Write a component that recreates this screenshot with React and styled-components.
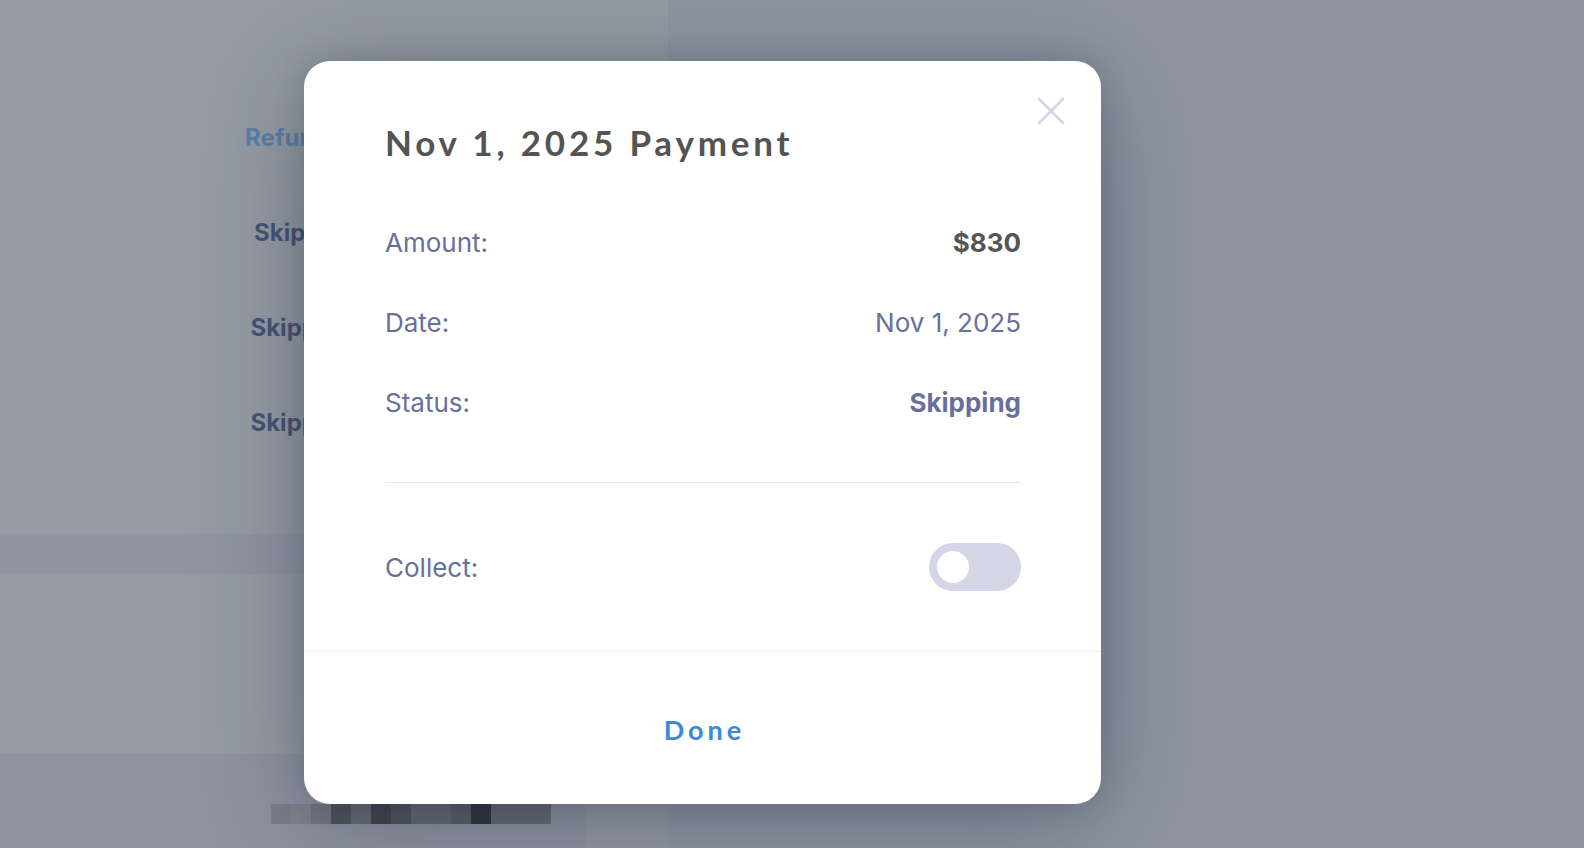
import React, { useState } from "react";
import styled, { createGlobalStyle } from "styled-components";

const GlobalStyle = createGlobalStyle`
  html, body {
    margin: 0;
    padding: 0;
  }
  body {
    font-family: Inter, "Liberation Sans", sans-serif;
  }
`;

const mosaic = [
  "#7b8189",
  "#80868e",
  "#747a82",
  "#50545b",
  "#686d74",
  "#42474e",
  "#51565d",
  "#656b74",
  "#656b74",
  "#5a5f67",
  "#30343c",
  "#656b74",
  "#656b74",
  "#656b74",
];

const rows = [
  { label: "Amount:", value: "$830", kind: "amount" },
  { label: "Date:", value: "Nov 1, 2025", kind: "plain" },
  { label: "Status:", value: "Skipping", kind: "status" },
];

const App = () => {
  const [collect, setCollect] = useState(false);

  return (
    <>
      <GlobalStyle />
      <Page>
        <LeftPanel>
          <StatusColumn>
            <StatusCell refund>Refunded</StatusCell>
            <StatusCell>Skipped</StatusCell>
            <StatusCell>Skipping</StatusCell>
            <StatusCell>Skipping</StatusCell>
          </StatusColumn>
          <Band />
          <Filler />
          <BottomArea>
            <Mosaic>
              {mosaic.map((c, i) => (
                <Tile key={i} color={c} />
              ))}
            </Mosaic>
          </BottomArea>
        </LeftPanel>

        <Modal>
          <CloseButton aria-label="Close">
            <svg width="30" height="30" viewBox="0 0 30 30">
              <path
                d="M3 3 L27 27 M27 3 L3 27"
                stroke="#d3d4e6"
                strokeWidth="2.6"
                strokeLinecap="round"
              />
            </svg>
          </CloseButton>
          <Body>
            <Title>Nov 1, 2025 Payment</Title>
            <Details>
              {rows.map((r) => (
                <Row key={r.label}>
                  <Label>{r.label}</Label>
                  <Value kind={r.kind}>{r.value}</Value>
                </Row>
              ))}
            </Details>
            <Divider />
            <Row collect>
              <Label>Collect:</Label>
              <Toggle on={collect} onClick={() => setCollect(!collect)}>
                <Knob />
              </Toggle>
            </Row>
          </Body>
          <Footer>
            <DoneButton>Done</DoneButton>
          </Footer>
        </Modal>
      </Page>
    </>
  );
};

export default App;

const Page = styled.div`
  position: relative;
  width: 100%;
  height: 848px;
  overflow: hidden;
  display: flex;
  background: #8f96a2;
`;

const LeftPanel = styled.div`
  width: 668px;
  height: 100%;
  display: flex;
  flex-direction: column;
  background: #959ca4;
`;

const StatusColumn = styled.div`
  height: 534px;
  box-sizing: border-box;
  padding: 90px 0 0 202px;
  display: flex;
  flex-direction: column;
`;

const StatusCell = styled.div`
  width: 200px;
  height: 95px;
  line-height: 95px;
  text-align: center;
  font-size: 24px;
  font-weight: 700;
  color: ${(p) => (p.refund ? "#5a80a8" : "#465373")};
`;

const Band = styled.div`
  height: 40px;
  background: #8f95a1;
`;

const Filler = styled.div`
  height: 180px;
`;

const BottomArea = styled.div`
  flex: 1;
  display: flex;
  align-items: flex-start;
  padding: 50px 0 0 271px;
  background: linear-gradient(to right, #8e94a0 0, #8e94a0 585px, #939aa3 585px);
`;

const Mosaic = styled.div`
  display: flex;
`;

const Tile = styled.div`
  width: 20px;
  height: 20px;
  background: ${(p) => p.color};
`;

const Modal = styled.div`
  position: absolute;
  left: 304px;
  top: 61px;
  width: 797px;
  height: 743px;
  background: #fff;
  border-radius: 26px;
  box-shadow: 0 20px 110px rgba(30, 38, 56, 0.35), 0 0 30px rgba(30, 38, 56, 0.18);
  display: flex;
  flex-direction: column;
  box-sizing: border-box;
`;

const CloseButton = styled.button`
  position: absolute;
  top: 35px;
  right: 35px;
  width: 30px;
  height: 30px;
  padding: 0;
  border: none;
  background: none;
  cursor: pointer;
  display: flex;
`;

const Body = styled.div`
  padding: 61px 80px 44px 81px;
  display: flex;
  flex-direction: column;
  border-bottom: 1px solid #eeeff5;
`;

const Title = styled.h1`
  margin: 0 0 40px;
  font-family: Lato, "Liberation Sans", sans-serif;
  font-size: 35px;
  line-height: 40px;
  font-weight: 700;
  letter-spacing: 3.8px;
  color: #545454;
  white-space: nowrap;
`;

const Details = styled.div`
  display: flex;
  flex-direction: column;
`;

const Row = styled.div`
  height: 80px;
  display: flex;
  align-items: center;
  justify-content: space-between;
  margin-top: ${(p) => (p.collect ? "44px" : "0")};
`;

const Label = styled.span`
  font-size: 26px;
  color: #66709a;
`;

const Value = styled.span`
  font-size: 26px;
  font-weight: ${(p) => (p.kind === "plain" ? 400 : 700)};
  color: ${(p) => (p.kind === "amount" ? "#555555" : "#66709a")};
`;

const Divider = styled.div`
  height: 1px;
  margin-top: 40px;
  background: #e8e9f0;
`;

const Toggle = styled.div`
  width: 92px;
  height: 48px;
  border-radius: 24px;
  background: ${(p) => (p.on ? "#3a89d8" : "#d4d5e7")};
  display: flex;
  align-items: center;
  justify-content: ${(p) => (p.on ? "flex-end" : "flex-start")};
  padding: 0 8px;
  box-sizing: border-box;
  cursor: pointer;
`;

const Knob = styled.div`
  width: 32px;
  height: 32px;
  border-radius: 50%;
  background: #fff;
`;

const Footer = styled.div`
  flex: 1;
  display: flex;
  align-items: center;
  justify-content: center;
  padding-top: 3px;
`;

const DoneButton = styled.button`
  border: none;
  background: none;
  padding: 0 0 0 4px;
  cursor: pointer;
  font-family: Lato, "Liberation Sans", sans-serif;
  font-size: 27px;
  font-weight: 700;
  letter-spacing: 4px;
  color: #3a89d8;
`;
